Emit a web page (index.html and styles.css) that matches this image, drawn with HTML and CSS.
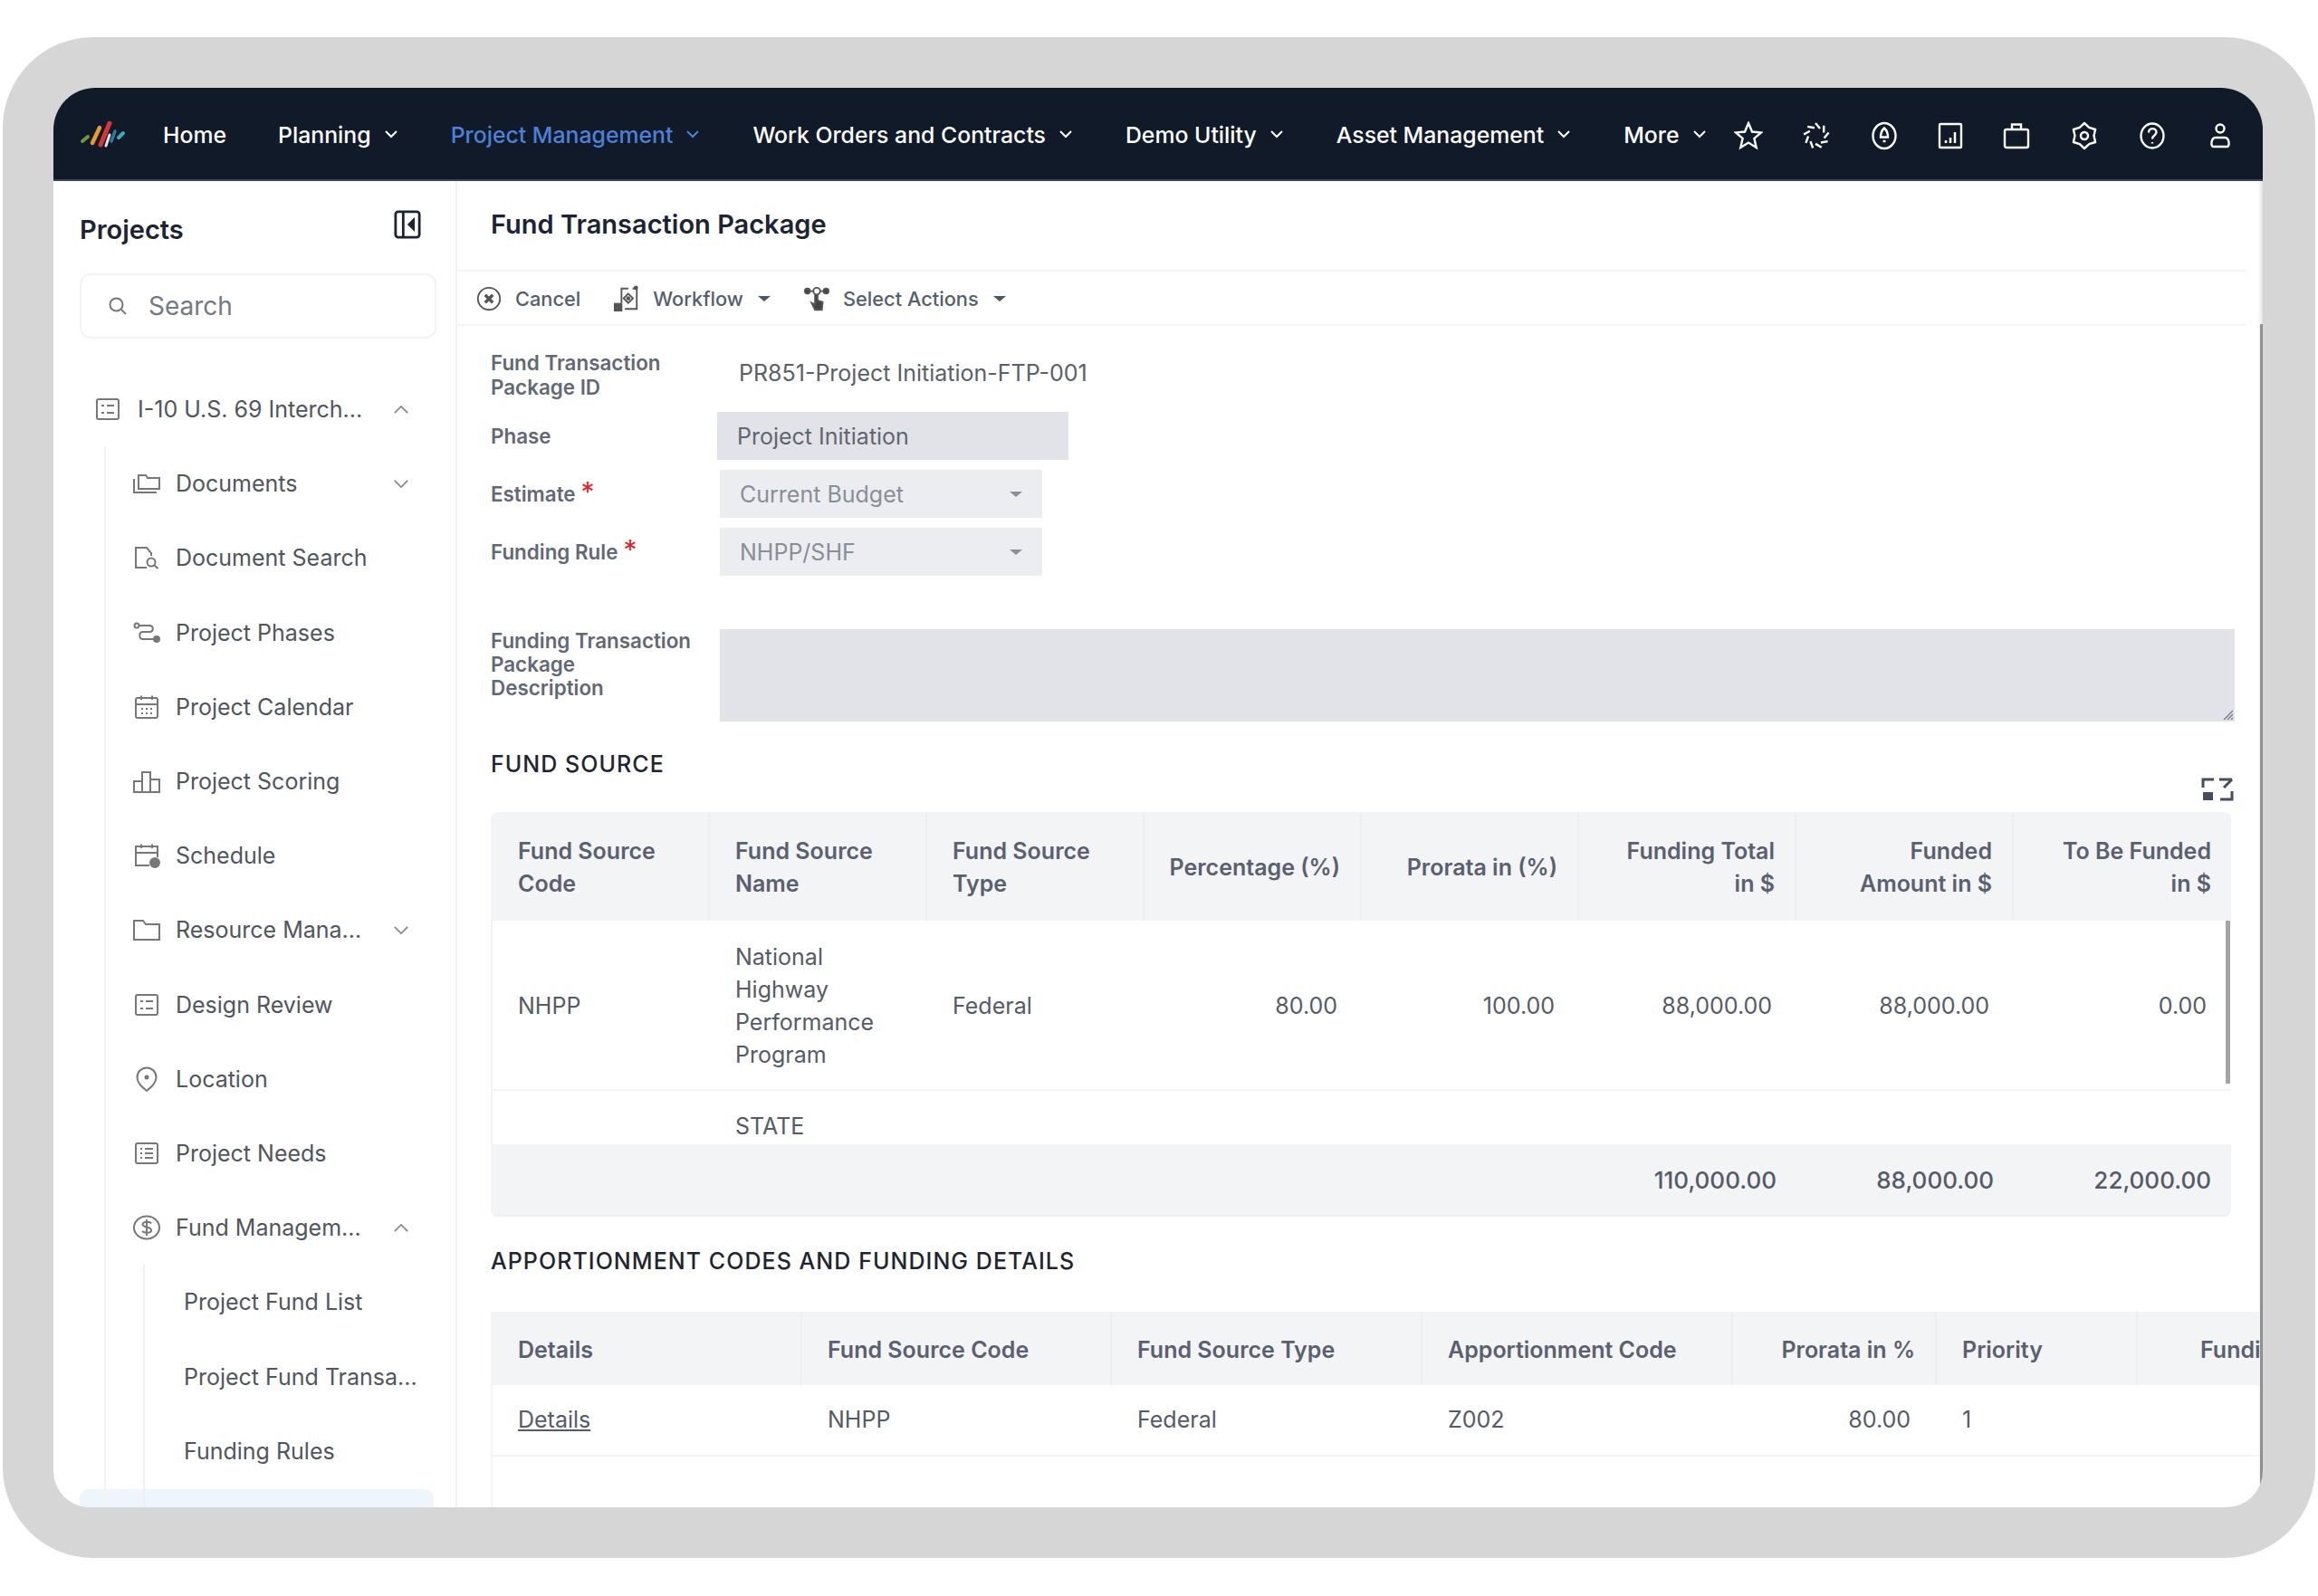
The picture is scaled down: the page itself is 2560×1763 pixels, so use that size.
FILE: index.html
```html
<!DOCTYPE html>
<html lang="en">
<head>
    <meta charset="UTF-8">
    <title>Fund Transaction Package</title>
    <link rel="stylesheet" href="styles.css">
</head>
<body>

<div class="frame">
<div class="app">

    <!-- Top navigation -->
    <header class="nav">
        <svg class="logo" viewBox="0 0 52 30" fill="none" stroke-linecap="round">
            <path d="M3 22 L9 17" stroke="#6f9a3c" stroke-width="4"/>
            <path d="M14 24 L22 7" stroke="#e59a35" stroke-width="4.500"/>
            <path d="M23 26 L33 2" stroke="#d9343a" stroke-width="5"/>
            <path d="M29 27 L33 15" stroke="#dfe5e8" stroke-width="3"/>
            <path d="M35 22 L39 11" stroke="#2b7f95" stroke-width="3.500"/>
            <path d="M43 18 L48 13" stroke="#3fa9bd" stroke-width="4"/>
        </svg>
        <nav class="nav-links">
            <a class="nav-link">Home</a>
            <a class="nav-link">Planning <svg class="nav-chev" viewBox="0 0 18 11"><path d="M3 2l6 6 6-6"/></svg></a>
            <a class="nav-link active">Project Management <svg class="nav-chev" viewBox="0 0 18 11"><path d="M3 2l6 6 6-6"/></svg></a>
            <a class="nav-link">Work Orders and Contracts <svg class="nav-chev" viewBox="0 0 18 11"><path d="M3 2l6 6 6-6"/></svg></a>
            <a class="nav-link">Demo Utility <svg class="nav-chev" viewBox="0 0 18 11"><path d="M3 2l6 6 6-6"/></svg></a>
            <a class="nav-link">Asset Management <svg class="nav-chev" viewBox="0 0 18 11"><path d="M3 2l6 6 6-6"/></svg></a>
            <a class="nav-link">More <svg class="nav-chev" viewBox="0 0 18 11"><path d="M3 2l6 6 6-6"/></svg></a>
        </nav>
        <div class="nav-icons">
            <svg viewBox="0 0 32 32"><path d="M16 2l4 9.500 10 .9-7.600 6.500 2.300 10-8.700-5.300-8.700 5.300 2.300-10L2 12.400l10-.9z"/></svg>
            <svg viewBox="0 0 32 32">
                <path d="M15 2l5 6"/>
                <path d="M15 2l5 6" transform="rotate(40 16 16)"/>
                <path d="M15 2l5 6" transform="rotate(80 16 16)"/>
                <path d="M15 2l5 6" transform="rotate(120 16 16)"/>
                <path d="M15 2l5 6" transform="rotate(160 16 16)"/>
                <path d="M15 2l5 6" transform="rotate(200 16 16)"/>
                <path d="M15 2l5 6" transform="rotate(240 16 16)"/>
                <path d="M15 2l5 6" transform="rotate(280 16 16)"/>
                <path d="M15 2l5 6" transform="rotate(320 16 16)"/>
            </svg>
            <svg viewBox="0 0 32 32"><ellipse cx="16" cy="16" rx="12.500" ry="14"/><path d="M16 7.500c3 2.500 4 5.500 4 10h-8c0-4.500 1-7.500 4-10zM14.500 22h3"/></svg>
            <svg class="narrow" viewBox="0 0 28 32"><rect x="2" y="3" width="24" height="26" rx="1"/><path d="M9 24v-3M14 24v-6M19 24V12" stroke-width="2.500"/></svg>
            <svg viewBox="0 0 32 32"><rect x="3" y="9" width="26" height="20" rx="2"/><path d="M11 9V3.500h10V9"/></svg>
            <svg viewBox="0 0 32 32"><path stroke-linejoin="round" d="M16 2l5.250 4.900L28.100 9 26.500 16l1.600 7-6.850 2.100L16 30l-5.250-4.900L3.900 23l1.600-7-1.600-7 6.850-2.100z"/><circle cx="16" cy="16" r="4"/></svg>
            <svg viewBox="0 0 32 32"><ellipse cx="16" cy="16" rx="12.500" ry="13.500"/><path d="M12 12.500c0-6 8.500-5.500 8.500-.5 0 3.500-4.500 3.500-4.500 7.500M16 23v1.500"/></svg>
            <svg viewBox="0 0 32 32"><circle cx="16" cy="8" r="4.500"/><path d="M8 28c-2.500 0-2.500-10 3-10h10c5.500 0 5.500 10 3 10z"/></svg>
        </div>
    </header>

    <div class="body">

        <!-- Project tree -->
        <aside class="sidebar">
            <div class="side-head">
                <h2>Projects</h2>
                <svg class="collapse" viewBox="0 0 32 34"><rect x="2" y="2" width="28" height="30" rx="3"/><path d="M11 2v30"/><path d="M23 12l-5 5 5 5z" fill="#1c2433"/></svg>
            </div>
            <div class="search">
                <svg viewBox="0 0 24 24"><circle cx="10.500" cy="10.500" r="7"/><path d="M16 16l5 5"/></svg>
                <span>Search</span>
            </div>

            <div class="tree-item root">
                <svg class="ti" viewBox="0 0 28 28"><rect x="2" y="3" width="24" height="22" rx="2"/><path d="M7 10h3M13 10h8M7 18h3M13 18h8"/></svg>
                <span class="tl">I-10 U.S. 69 Interch...</span>
                <svg class="tc" viewBox="0 0 20 12"><path d="M2 10l8-8 8 8"/></svg>
            </div>

            <div class="tree-children">
                <div class="tree-item">
                    <svg class="ti" viewBox="0 0 32 28"><path d="M7 20V5h8l2 3h13v12z"/><path d="M2 9v15h25"/></svg>
                    <span class="tl">Documents</span>
                    <svg class="tc" viewBox="0 0 20 12"><path d="M2 2l8 8 8-8"/></svg>
                </div>
                <div class="tree-item">
                    <svg class="ti" viewBox="0 0 32 28"><path d="M16 25H4V3h12l5 6v3"/><circle cx="21" cy="19" r="4.500"/><path d="M24.500 22.500l4 3.500"/></svg>
                    <span class="tl">Document Search</span>
                </div>
                <div class="tree-item">
                    <svg class="ti" viewBox="0 0 32 28"><circle cx="5" cy="6" r="2.500"/><path d="M8 6h11c5 0 5 7 0 7h-7c-5 0-5 8 0 8h11"/><circle cx="27" cy="21" r="3" fill="#777"/></svg>
                    <span class="tl">Project Phases</span>
                </div>
                <div class="tree-item">
                    <svg class="ti" viewBox="0 0 32 28"><rect x="4" y="4" width="24" height="22" rx="2"/><path d="M4 11h24M10 1.500V6M22 1.500V6M10 16h2M15 16h2M20 16h2M10 21h2M15 21h2M20 21h2"/></svg>
                    <span class="tl">Project Calendar</span>
                </div>
                <div class="tree-item">
                    <svg class="ti" viewBox="0 0 32 28"><path d="M2 14h9v12H2zM11 4h9v22h-9zM20 12h10v14H20z"/></svg>
                    <span class="tl">Project Scoring</span>
                </div>
                <div class="tree-item">
                    <svg class="ti" viewBox="0 0 32 28"><path d="M19 25H4V4h24v12M4 11h24M10 1.500V6M22 1.500V6"/><circle cx="25" cy="22" r="5" fill="#777"/></svg>
                    <span class="tl">Schedule</span>
                </div>
                <div class="tree-item">
                    <svg class="ti" viewBox="0 0 32 28"><path d="M2 25V4h10l3 4h15v17z"/></svg>
                    <span class="tl">Resource Mana...</span>
                    <svg class="tc" viewBox="0 0 20 12"><path d="M2 2l8 8 8-8"/></svg>
                </div>
                <div class="tree-item">
                    <svg class="ti" viewBox="0 0 32 28"><rect x="4" y="3" width="24" height="22" rx="2"/><path d="M9 10h3M15 10h8M9 18h3M15 18h8"/></svg>
                    <span class="tl">Design Review</span>
                </div>
                <div class="tree-item">
                    <svg class="ti" viewBox="0 0 32 28"><path d="M16 27C10 22 5.500 18 5.500 12a10.500 10.500 0 0 1 21 0c0 6-4.500 10-10.500 15z"/><circle cx="16" cy="12" r="1.500" fill="#777"/></svg>
                    <span class="tl">Location</span>
                </div>
                <div class="tree-item">
                    <svg class="ti" viewBox="0 0 32 28"><rect x="4" y="3" width="24" height="22" rx="2"/><path d="M9 9h2M14 9h9M9 14h2M14 14h9M9 19h2M14 19h9"/></svg>
                    <span class="tl">Project Needs</span>
                </div>
                <div class="tree-item">
                    <svg class="ti" viewBox="0 0 32 28"><ellipse cx="16" cy="14" rx="14" ry="12.500"/><path d="M21 9.500c-1-2-9-3-9.500 1 0 4 9.500 2 9.500 6.500 0 4-8 3-10 1M16 5v18"/></svg>
                    <span class="tl">Fund Managem...</span>
                    <svg class="tc" viewBox="0 0 20 12"><path d="M2 10l8-8 8 8"/></svg>
                </div>
                <div class="tree-sub">
                    <div class="sub-item">Project Fund List</div>
                    <div class="sub-item">Project Fund Transa...</div>
                    <div class="sub-item">Funding Rules</div>
                </div>
            </div>
            <div class="active-row"></div>
        </aside>

        <!-- Main panel -->
        <main class="main">
            <h1 class="page-title">Fund Transaction Package</h1>

            <div class="toolbar">
                <span class="tool">
                    <svg viewBox="0 0 32 32"><circle cx="16" cy="16" r="13"/><path d="M11.500 11.500l9 9M20.500 11.500l-9 9" stroke-width="3.500"/></svg>
                    Cancel
                </span>
                <span class="tool">
                    <svg viewBox="0 0 32 32"><path d="M10 21V4h8M23 4h5v24H14"/><path d="M18 10l5.500 5.500L18 21l-5.500-5.500z"/><circle cx="18" cy="15.500" r="1.500" fill="#555"/><rect x="2" y="22" width="8" height="8" fill="#555"/><circle cx="27" cy="3" r="1.500" fill="#555"/></svg>
                    Workflow <i class="caret"></i>
                </span>
                <span class="tool">
                    <svg viewBox="0 0 32 32"><circle cx="5" cy="7" r="3" fill="#444"/><circle cx="27" cy="7" r="3" fill="#444"/><circle cx="16" cy="7" r="4"/><path d="M8 7h4M20 7h4"/><path d="M14 11v12l-4-2 4 8h8l1-9-6-2v-7" fill="#444"/></svg>
                    Select Actions <i class="caret"></i>
                </span>
            </div>

            <section class="form">
                <div class="row row-id">
                    <label>Fund Transaction<br>Package ID</label>
                    <div class="value">PR851-Project Initiation-FTP-001</div>
                </div>
                <div class="row row-phase">
                    <label>Phase</label>
                    <div class="field-phase">Project Initiation</div>
                </div>
                <div class="row row-sel">
                    <label>Estimate<b>*</b></label>
                    <div class="select">Current Budget<i class="caret light"></i></div>
                </div>
                <div class="row row-sel">
                    <label>Funding Rule<b>*</b></label>
                    <div class="select">NHPP/SHF<i class="caret light"></i></div>
                </div>
                <div class="row row-desc">
                    <label>Funding Transaction<br>Package<br>Description</label>
                    <div class="textarea">
                        <svg class="grip" viewBox="0 0 14 14"><path d="M13 3L3 13M13 7l-6 6M13 11l-2 2"/></svg>
                    </div>
                </div>
            </section>

            <div class="section-head">
                <h3>FUND SOURCE</h3>
                <svg class="expand" viewBox="0 0 36 28"><path d="M2 12V3h12M20 3h14M34 3l-9 9M34 16v9H21"/><rect x="2" y="17" width="11" height="9" fill="#444e5c" stroke="none"/></svg>
            </div>

            <div class="grid-box">
                <div class="g1 ghead">
                    <div>Fund Source<br>Code</div>
                    <div>Fund Source<br>Name</div>
                    <div>Fund Source<br>Type</div>
                    <div class="num">Percentage (%)</div>
                    <div class="num">Prorata in (%)</div>
                    <div class="num">Funding Total<br>in $</div>
                    <div class="num">Funded<br>Amount in $</div>
                    <div class="num">To Be Funded<br>in $</div>
                </div>
                <div class="gbody">
                    <div class="g1 grow">
                        <div>NHPP</div>
                        <div>National<br>Highway<br>Performance<br>Program</div>
                        <div>Federal</div>
                        <div class="num">80.00</div>
                        <div class="num">100.00</div>
                        <div class="num">88,000.00</div>
                        <div class="num">88,000.00</div>
                        <div class="num">0.00</div>
                    </div>
                    <div class="g1 grow grow-next">
                        <div></div>
                        <div>STATE</div>
                    </div>
                    <div class="gscroll"></div>
                </div>
                <div class="g1 gfoot">
                    <div></div><div></div><div></div><div></div><div></div>
                    <div class="num">110,000.00</div>
                    <div class="num">88,000.00</div>
                    <div class="num">22,000.00</div>
                </div>
            </div>

            <h3 class="appt-title">APPORTIONMENT CODES AND FUNDING DETAILS</h3>

            <div class="grid-two">
                <div class="g2 ghead">
                    <div>Details</div>
                    <div>Fund Source Code</div>
                    <div>Fund Source Type</div>
                    <div>Apportionment Code</div>
                    <div class="num">Prorata in %</div>
                    <div>Priority</div>
                    <div class="cut">Funding Amount</div>
                </div>
                <div class="g2 grow">
                    <div><a class="link">Details</a></div>
                    <div>NHPP</div>
                    <div>Federal</div>
                    <div>Z002</div>
                    <div class="num">80.00</div>
                    <div>1</div>
                    <div></div>
                </div>
            </div>

            <div class="main-scroll"></div>
        </main>
    </div>
</div>
</div>

</body>
</html>
```

FILE: styles.css
```css
/* General */
html, body {
    margin: 0;
    background: #fff;
}

body {
    font-family: 'Inter', 'Liberation Sans', sans-serif;
    color: #555b66;
}

h1, h2, h3 {
    margin: 0;
}

/* Grey device frame */
.frame {
    box-sizing: border-box;
    width: 2554px;
    height: 1680px;
    margin: 41px 0 0 3px;
    padding: 56px 58px 56px 56px;
    background: #d6d6d6;
    border-radius: 100px;
}

.app {
    display: flex;
    flex-direction: column;
    height: 100%;
    background: #fff;
    border-radius: 46px 46px 40px 40px;
    overflow: hidden;
}

/* Navigation */
.nav {
    flex: none;
    display: flex;
    align-items: center;
    box-sizing: border-box;
    height: 103px;
    padding: 2px 0 0 29px;
    background: #101a28;
    border-bottom: 2px solid #3c4656;
    color: #fff;
}

.logo {
    flex: none;
    width: 52px;
    height: 30px;
    margin-right: 40px;
}

.nav-links {
    display: flex;
    align-items: center;
    gap: 57px;
}

.nav-link {
    display: flex;
    align-items: center;
    gap: 13px;
    font-size: 24.8px;
    font-weight: 500;
    white-space: nowrap;
}

.nav-link.active {
    color: #4e80d8;
}

.nav-chev {
    width: 18px;
    height: 11px;
    fill: none;
    stroke: currentColor;
    stroke-width: 2;
}

.nav-icons {
    display: flex;
    align-items: center;
    gap: 43px;
    margin: 2px 0 0 29px;
}

.nav-icons svg {
    flex: none;
    width: 32px;
    height: 32px;
    fill: none;
    stroke: #fff;
    stroke-width: 2.4;
}

.nav-icons svg.narrow {
    width: 28px;
}

/* Page body */
.body {
    flex: 1;
    display: flex;
    min-height: 0;
}

/* Sidebar */
.sidebar {
    position: relative;
    flex: none;
    box-sizing: border-box;
    width: 446px;
    padding: 0 21px 0 29px;
    border-right: 2px solid #f1f2f4;
    overflow: hidden;
}

.side-head {
    display: flex;
    justify-content: space-between;
    align-items: center;
    height: 102px;
    padding-right: 17px;
}

.side-head h2 {
    margin-top: 5px;
    font-size: 29px;
    font-weight: 600;
    color: #1c2433;
}

.collapse {
    width: 30px;
    height: 32px;
    margin-top: -6px;
    fill: none;
    stroke: #1c2433;
    stroke-width: 3;
}

.search {
    display: flex;
    align-items: center;
    gap: 22px;
    box-sizing: border-box;
    height: 72px;
    padding-left: 28px;
    border: 2px solid #f3f3f4;
    border-radius: 12px;
    font-size: 28px;
    color: #757a82;
}

.search svg {
    width: 24px;
    height: 24px;
    fill: none;
    stroke: #777;
    stroke-width: 2;
}

.tree-item {
    display: flex;
    align-items: center;
    height: 82.2px;
    font-size: 25px;
    color: #50555e;
}

.tree-item .ti {
    flex: none;
    width: 32px;
    height: 28px;
    margin-right: 16px;
    fill: none;
    stroke: #777;
    stroke-width: 2;
}

.tree-item .tl {
    flex: 1;
    white-space: nowrap;
}

.tree-item .tc {
    flex: none;
    width: 18px;
    height: 11px;
    margin-right: 30px;
    fill: none;
    stroke: #888;
    stroke-width: 2;
}

.tree-item.root {
    margin: 37px 0 0 17px;
}

.tree-item.root .ti {
    width: 28px;
    margin-right: 19px;
}

.tree-children {
    position: relative;
    z-index: 1;
    margin-left: 27px;
    padding-left: 29px;
    border-left: 2px solid #f3f4f6;
}

.tree-sub {
    margin-left: 12px;
    padding: 0 0 60px 43px;
    border-left: 2px solid #eef0f3;
}

.sub-item {
    display: flex;
    align-items: center;
    height: 82.2px;
    font-size: 25px;
    color: #50555e;
    white-space: nowrap;
}

.active-row {
    position: absolute;
    left: 29px;
    right: 24px;
    bottom: 0;
    height: 20px;
    background: #eff5fc;
    border-radius: 10px 10px 0 0;
}

/* Main panel */
.main {
    position: relative;
    flex: 1;
    min-width: 0;
    overflow: hidden;
    box-shadow: inset -4px 0 4px -2px rgba(0, 0, 0, 0.14);
}

.page-title {
    height: 98px;
    padding: 0 0 0 37px;
    line-height: 96px;
    font-size: 29px;
    font-weight: 600;
    color: #1c2433;
}

.toolbar {
    display: flex;
    align-items: center;
    gap: 36px;
    box-sizing: border-box;
    height: 62px;
    margin-right: 18px;
    padding: 2px 0 0 20px;
    border-top: 2px solid #f4f4f5;
    border-bottom: 2px solid #f4f4f5;
    font-size: 21.8px;
    font-weight: 500;
    color: #555e6c;
}

.tool {
    display: flex;
    align-items: center;
    gap: 14px;
}

.tool svg {
    width: 30px;
    height: 30px;
    fill: none;
    stroke: #555;
    stroke-width: 2;
}

.caret {
    display: inline-block;
    width: 0;
    height: 0;
    margin-left: 2px;
    border-left: 7px solid transparent;
    border-right: 7px solid transparent;
    border-top: 6px solid #4b5563;
}

.caret.light {
    margin-left: auto;
    border-top-color: #8a8f9a;
}

/* Form */
.form {
    padding: 25px 31px 0 37px;
}

.row {
    display: flex;
    align-items: center;
}

.row label {
    flex: none;
    width: 253px;
    font-size: 22.4px;
    font-weight: 600;
    line-height: 26px;
    color: #626875;
}

.row label b {
    margin-left: 6px;
    font-size: 30px;
    font-weight: 400;
    line-height: 20px;
    color: #e0242c;
}

.row-id {
    height: 62px;
}

.row-id label {
    margin-bottom: 4px;
    line-height: 27px;
}

.value {
    margin: 0 0 8px 21px;
    font-size: 25px;
    color: #5a5f69;
}

.row-phase {
    height: 53px;
    margin-top: 8px;
}

.field-phase {
    box-sizing: border-box;
    width: 388px;
    height: 53px;
    margin-left: -3px;
    padding-left: 22px;
    line-height: 54px;
    background: #e1e3e8;
    font-size: 25px;
    color: #62666f;
}

.row-sel {
    height: 53px;
    margin-top: 11px;
}

.select {
    display: flex;
    align-items: center;
    box-sizing: border-box;
    width: 356px;
    height: 53px;
    padding: 0 22px;
    background: #ebedf0;
    font-size: 25px;
    color: #8a8e96;
}

.row-desc {
    align-items: flex-start;
    margin-top: 59px;
}

.textarea {
    position: relative;
    flex: 1;
    height: 102px;
    background: #e1e3e8;
}

.grip {
    position: absolute;
    right: 1px;
    bottom: 1px;
    width: 14px;
    height: 14px;
    fill: none;
    stroke: #7b808a;
    stroke-width: 1.5;
}

/* Section headings */
.section-head {
    display: flex;
    justify-content: space-between;
    align-items: flex-start;
    box-sizing: border-box;
    height: 100px;
    padding: 32px 32px 0 37px;
}

h3 {
    font-size: 25px;
    font-weight: 500;
    letter-spacing: 1.05px;
    color: #1f2530;
}

.expand {
    width: 36px;
    height: 28px;
    margin-top: 29px;
    fill: none;
    stroke: #444e5c;
    stroke-width: 3;
}

/* Fund source grid */
.grid-box {
    margin: 0 35px 0 37px;
    border-radius: 8px;
    overflow: hidden;
    border-left: 2px solid #f1f2f4;
    border-bottom: 2px solid #eceef0;
}

.g1 {
    display: grid;
    grid-template-columns: repeat(8, 1fr);
}

.ghead {
    background: #f3f4f6;
    font-size: 25px;
    font-weight: 600;
    line-height: 36px;
    color: #5a6070;
}

.ghead > div {
    display: flex;
    flex-direction: column;
    justify-content: center;
    padding: 2px 22px 0 28px;
    border-right: 2px solid #edeef1;
    white-space: nowrap;
}

.ghead > div:last-child {
    border-right: 0;
}

.g1.ghead {
    height: 120px;
}

.ghead .num {
    align-items: flex-end;
    text-align: right;
    padding-left: 0;
}

.gbody {
    position: relative;
    height: 247px;
    overflow: hidden;
}

.grow {
    font-size: 25px;
    line-height: 36px;
    color: #555b66;
    border-bottom: 2px solid #f5f5f6;
}

.grow > div {
    align-self: center;
    padding: 0 0 0 28px;
}

.g1.grow {
    box-sizing: border-box;
    height: 188px;
    padding-top: 2px;
}

.g1.grow-next {
    height: 59px;
    padding-top: 18px;
    border-bottom: 0;
}

.grow .num {
    padding: 0 27px 0 0;
    text-align: right;
}

.gscroll {
    position: absolute;
    top: 0;
    right: 1px;
    width: 5px;
    height: 180px;
    background: #a3a5a9;
}

.gfoot {
    align-items: center;
    height: 78px;
    background: #f3f4f6;
    font-size: 26px;
    font-weight: 500;
    color: #555b66;
}

.gfoot .num {
    padding-right: 22px;
    text-align: right;
}

/* Apportionment grid */
.appt-title {
    padding: 34px 0 41px 37px;
}

.grid-two {
    margin-left: 37px;
    min-height: 300px;
    border-left: 2px solid #f3f4f6;
}

.g2 {
    display: grid;
    grid-template-columns: 342px 342px 343px 343px 225px 222px 300px;
    width: 1980px;
}

.g2.ghead {
    height: 81px;
}

.g2.ghead .cut {
    padding-left: 69px;
}

.g2.grow {
    height: 77px;
    line-height: 73px;
    padding-top: 0;
}

.g2.grow > div {
    padding-left: 28px;
}

.g2.grow .num {
    padding: 0 29px 0 0;
}

.link {
    text-decoration: underline;
}

.main-scroll {
    position: absolute;
    top: 158px;
    right: 0;
    bottom: 24px;
    width: 3px;
    background: #8e9094;
}
```
